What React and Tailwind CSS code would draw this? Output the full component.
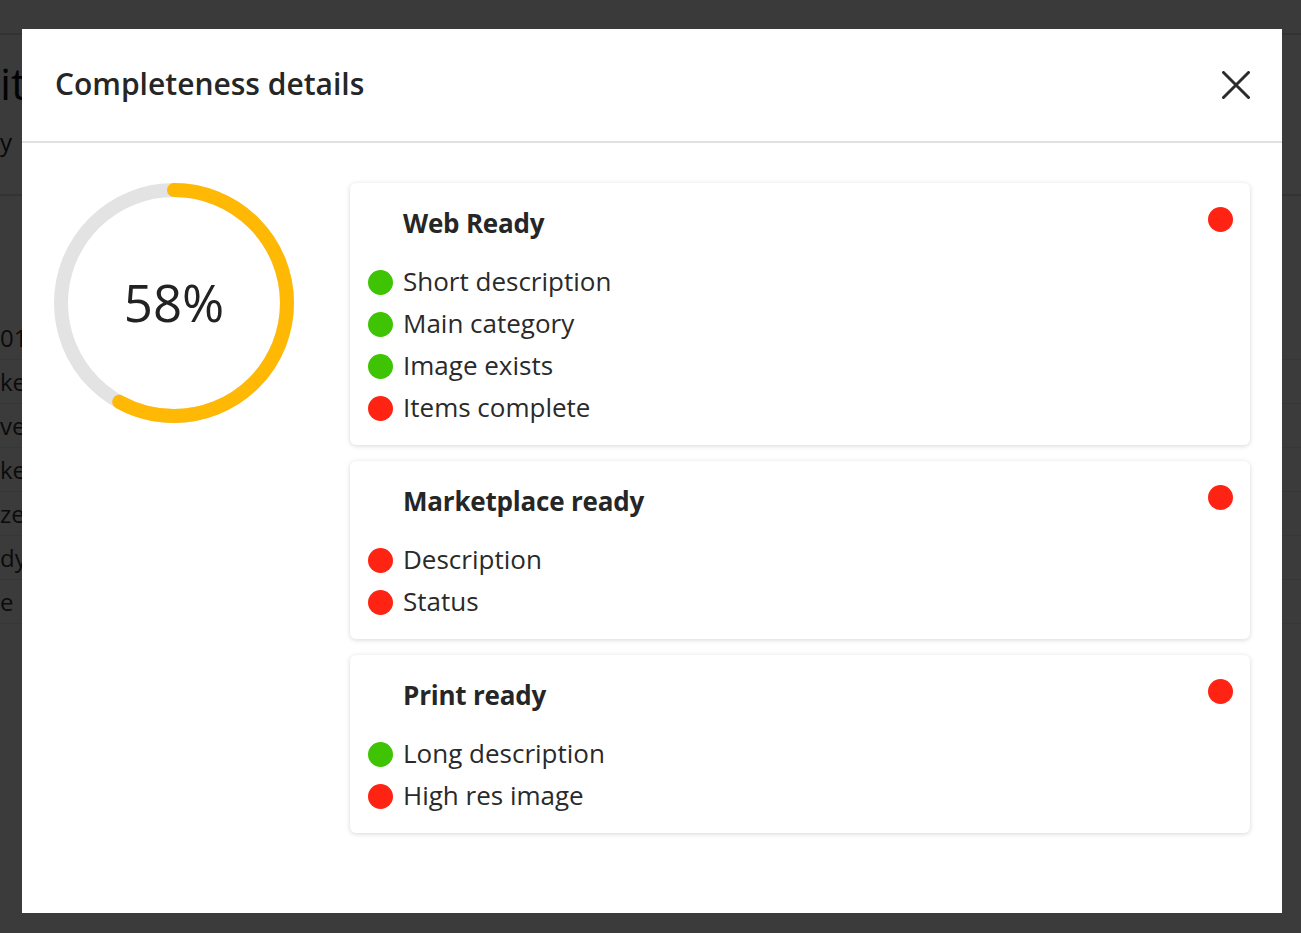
import React from "react";

const font = { fontFamily: "'Open Sans', 'Noto Sans', Lato, sans-serif" };

const GREEN = "bg-[#3fc404]";
const RED = "bg-[#ff2313]";

function Dot({ ok }) {
  return <span className={`block h-[25px] w-[25px] shrink-0 rounded-full ${ok ? GREEN : RED}`} />;
}

function Card({ title, items }) {
  return (
    <div className="rounded-[6px] bg-white pl-[18px] pr-[17px] pt-[24px] pb-[16px] shadow-[0_1px_5px_rgba(0,0,0,0.16)]">
      <div className="flex items-start justify-between">
        <div className="ml-[35px] text-[26px] font-bold leading-[32px] tracking-[-0.2px] text-[#262626]">{title}</div>
        <Dot ok={false} />
      </div>
      <div className="mt-[22px] flex flex-col">
        {items.map(([label, ok]) => (
          <div key={label} className="flex h-[42px] items-center gap-[10px]">
            <Dot ok={ok} />
            <span className="mb-[2px] text-[26px] leading-none text-[#2a2a2a]">{label}</span>
          </div>
        ))}
      </div>
    </div>
  );
}

function Ring({ pct }) {
  const r = 113;
  const c = 2 * Math.PI * r;
  return (
    <div className="relative h-[240px] w-[240px] shrink-0">
      <svg width="240" height="240" viewBox="0 0 240 240" className="block">
        <circle cx="120" cy="120" r={r} fill="none" stroke="#e3e3e3" strokeWidth="14" />
        <circle
          cx="120"
          cy="120"
          r={r}
          fill="none"
          stroke="#ffb905"
          strokeWidth="14"
          strokeLinecap="round"
          strokeDasharray={`${(c * pct) / 100} ${c}`}
          transform="rotate(-90 120 120)"
        />
      </svg>
      <div className="absolute inset-0 flex items-center justify-center pb-[2px] text-[51px] font-medium text-[#222]">
        {pct}%
      </div>
    </div>
  );
}

export default function App() {
  const rows = ["01", "ket", "ve", "ket", "ze", "dy", "e"];
  return (
    <div className="relative h-[933px] w-full overflow-hidden bg-white" style={font}>
      {/* background page */}
      <div className="flex h-[35px] border-b-2 border-[#dcdcdc] bg-[#f9f9f9]" />
      <div className="flex flex-col">
        <div className="mt-[22px] text-[44px] leading-[52px] text-[#111]">it</div>
        <div className="mt-[18px] text-[24px] leading-[30px] text-[#222]">y</div>
        <div className="mt-[37px] border-b-2 border-[#dcdcdc]" />
        <div className="mt-[120px] flex flex-col">
          {rows.map((r, i) => (
            <div
              key={i}
              className="flex h-[44px] items-center border-b border-[#e8e8e8] text-[24px] text-[#333]"
            >
              {r}
            </div>
          ))}
        </div>
      </div>

      {/* overlay */}
      <div className="absolute inset-0 bg-black/[0.77]" />

      {/* modal */}
      <div className="absolute left-[22px] top-[29px] flex h-[884px] w-[1260px] flex-col bg-white">
        <div className="flex h-[114px] shrink-0 items-center justify-between border-b-2 border-[#e0e0e0] pl-[33px] pr-[32px]">
          <h2 className="mb-[3px] text-[30px] font-semibold text-[#262626]">Completeness details</h2>
          <button className="flex h-[28px] w-[28px] items-center justify-center">
            <svg width="28" height="28" viewBox="0 0 28 28" fill="none" stroke="#2b2b2b" strokeWidth="3" strokeLinecap="round">
              <path d="M1.5 1.5L26.5 26.5M26.5 1.5L1.5 26.5" />
            </svg>
          </button>
        </div>
        <div className="flex gap-[56px] pl-[32px] pr-[32px] pt-[40px]">
          <Ring pct={58} />
          <div className="flex flex-1 flex-col gap-[16px]">
            <Card
              title="Web Ready"
              items={[
                ["Short description", true],
                ["Main category", true],
                ["Image exists", true],
                ["Items complete", false],
              ]}
            />
            <Card
              title="Marketplace ready"
              items={[
                ["Description", false],
                ["Status", false],
              ]}
            />
            <Card
              title="Print ready"
              items={[
                ["Long description", true],
                ["High res image", false],
              ]}
            />
          </div>
        </div>
      </div>
    </div>
  );
}
